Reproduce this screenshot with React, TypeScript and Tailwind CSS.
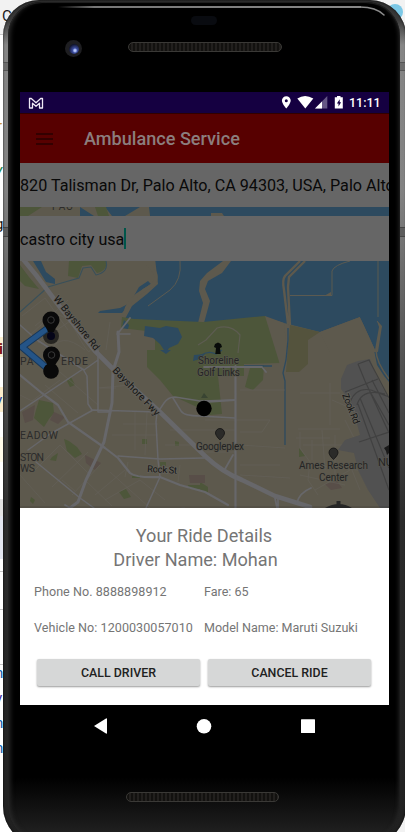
import React from "react";

const PAGE_SLIVERS = [
  { top: 117, left: -3, text: "r", cls: "text-[#c98a2b]" },
  { top: 164, left: -6, text: "Y", cls: "text-[#1f8a4c]" },
  { top: 215, left: -5, text: "g", cls: "text-[#111]" },
  { top: 340, left: -1, text: "i", cls: "text-[#7a1010] font-bold" },
  { top: 391, left: -5, text: "v", cls: "text-[#173d9c]" },
  { top: 664, left: -5, text: "n", cls: "text-[#0b5cad]" },
  { top: 689, left: -5, text: "v", cls: "text-[#3a1c9c]" },
  { top: 714, left: -5, text: "n", cls: "text-[#0b5cad]" },
  { top: 739, left: -5, text: "n", cls: "text-[#0b5cad]" },
];

/* The desktop window that shows round the edges of the emulator. */
function Desktop() {
  return (
    <div className="absolute inset-0 overflow-hidden bg-white">
      <div className="h-[35px] border-b border-[#c8c8c8] bg-[#f2f2f2]" />
      <div className="absolute top-[6px] left-[2px] text-[15px] leading-5 text-[#1b1b1b]">C</div>
      <div className="absolute top-[4px] left-[387px] size-[16px] rounded-full bg-[#7cc8e6]" />
      <div className="absolute top-[337px] left-0 h-[20px] w-1 bg-[#fbf0d2]" />
      <div className="absolute top-[387px] left-0 h-[25px] w-1 bg-[#fbeccb]" />
      <div className="absolute top-[437px] left-0 h-[25px] w-1 bg-[#fffbea]" />
      <div className="absolute top-[499px] left-0 h-[17px] w-1 bg-[#e4e4e4]" />
      <div className="absolute top-[516px] left-0 h-[43px] w-1 bg-[#e3e6f0]" />
      <div className="absolute top-[571px] left-0 h-px w-1 bg-[#c4c4c4]" />
      <div className="absolute top-[609px] left-0 h-px w-1 bg-[#c4c4c4]" />
      <div className="absolute top-[664px] left-0 h-px w-1 bg-[#c4c4c4]" />
      <div className="absolute right-0 bottom-0 size-10 bg-[#f2f2f2]" />
      {PAGE_SLIVERS.map((s) => (
        <span key={s.top} className={"absolute text-[15px] leading-[18px] " + s.cls} style={{ top: s.top, left: s.left }}>
          {s.text}
        </span>
      ))}
    </div>
  );
}

function MapView() {
  return (
    <svg viewBox="20 207 369 301" className="absolute inset-0 h-full w-full" fontFamily="Roboto, sans-serif">
      <rect x="20" y="207" width="369" height="301" fill="#5d594d" />
      {/* Water */}
      <g fill="#2d4a5f">
        <path d="M149 207H389V360L375 350L360 317L320 332L284 323L265 317L203 323L125 319L132 306L147 294L158 284L157 275Z" />
        <path d="M105 207H140L125 216H112ZM80 207L94 216H80Z" />
        <path d="M33 261H41L46 272L55 279V284L46 282Z" />
        <path d="M148 281L139 287L130 303L120 308L100 311L98 313L122 313L133 300L143 289L151 284Z" />
        <path d="M374 350H389V382L384 376L377 365Z" />
      </g>
      <path d="M360 317L375 350H389V352H330L320 332Z" fill="#5d594d" />
      <path d="M360 317L378 352H389V317Z" fill="#2d4a5f" />
      <path d="M223 261H231L222 273L208 281L205 289L210 301L204 323H198L203 303L199 291L200 281L207 273Z" fill="#5d594d" />
      <path d="M211 213h11l2 3h-13z" fill="#5d594d" />
      <path d="M145 261C151 269 159 272 155 282C149 290 135 292 127 307L122 321" fill="none" stroke="#5d594d" strokeWidth="3.5" />
      <path d="M300 261L285 276Q282 280 284 290L288 324M305 261L289 277L288 287L290 326" fill="none" stroke="#5d594d" strokeWidth="2.4" />
      <path d="M290 295.5H332V271Q334 265 350 261M378 261V317M377 321L381 326L377 350M180 261Q182 280 170 290L148 306" fill="none" stroke="#5b5a51" strokeWidth="1" />
      <path d="M331 292v4h-7zM377 321L382 326L378 352L375 350L379 327Z" fill="#5d594d" />
      <path d="M376 350Q376 362 389 379" fill="none" stroke="#5d594d" strokeWidth="1.5" />

      {/* Parks */}
      <g fill="#4d563a">
        <path d="M20 207H42L28 216H20ZM95 207H106L109 216H98Z" />
        <path d="M69 261H106Q108 270 97 273L91 265L82 266L78 278L68 276Z" />
        <path d="M20 265L29 277L39 289L25 286L20 281Z" />
        <path d="M122 317L134 319L203 322L265 316L268 319L280 362V363L244 364V376H218L222 414L210 415L197 407L173 396L160 380L147 367V350H155V332L121 328Z" />
        <path d="M250 368L264 365L263 380L253 390L245 387Z" />
        <path d="M39 400L53 403L54 413L49 419L44 427L34 418L36 410Z" />
        <path d="M67 381L71 377L75 385L70 387Z M64 439L69 441L77 447L82 454L75 458L67 451Z M52 457L58 453L56 461L50 460Z M119 492L126 489L131 497L124 499Z" />
        <path d="M142 439h5v5h-5zM175 441l4 1v4h-4zM188 485h12l2 4h-13zM160 462h6v4h-6zM299 448l6 8-6 1zM200 482l8 5v7l-8-4zM132 475h8v3h-8zM31 497l4 3-2 4-3-3z" />
      </g>
      <path d="M265 316L284 323L289 372L281 368Z" fill="#5d594d" />
      <path d="M290 325L320 332L308 340V364L299 372H286Z" fill="#54533d" />
      <path d="M106 261Q109 272 96 275L91 267L83 268L79 278L65 282L48 287L20 312" fill="none" stroke="#39505a" strokeWidth="1.1" />
      <path d="M145 326L160 328L166 326L178 328L182 337L178 344L169 348L166 353L160 344L153 338L144 336ZM124 320L129 325L128 329L122 328ZM160 350h11l-5 4zM194 355l11-1-5 5-7 2z" fill="#2d4a5f" />
      <path d="M288 328L288 340L286 360L283 373L285 381V445M244 366H272M200 356Q208 350 216 354L222 350" fill="none" stroke="#2d4a5f" strokeWidth="1.3" />
      <path d="M198 345L206 340L217 328Q231 324 240 335L238 353" fill="none" stroke="#5d5c51" strokeWidth="1.2" />

      {/* Built-up blocks */}
      <g fill="#584e48">
        <path d="M22 412L35 405L33 420L25 423ZM54 412L65 417L58 424L50 420ZM85 455L101 463L95 470L86 463ZM189 475H205V483H190ZM325 484L337 481L342 488L331 490Z" />
      </g>

      {/* Minor streets */}
      <g fill="none" stroke="#64625a" strokeWidth="0.6">
        <path d="M22 316L45 298L68 330M30 335L68 300M38 343L76 317M35 326Q60 302 75 330T90 350M50 352Q60 330 85 350M110 322L106 350M20 395L32 401L60 380M60 372L98 405M45 385L78 413M100 388H116M130 385L98 388M123 424H158M135 412V450M147 412L145 455M112 435H158M170 430H235M165 445H205" />
        <path d="M20 475L45 503M35 470L60 445L90 475M52 487L88 452M72 495L100 465M62 480L75 491M95 495L125 470M105 500L140 480L165 500M85 480L112 506M110 472L150 508M128 462L125 477M180 465L178 482M205 420H270L262 432H240M205 452H235M240 390H285M240 445L285 448M240 465H280M240 475L290 478M300 393H340M330 383V425M355 410L332 400M298 429H340M300 432L300 448L310 462L308 480L318 495M303 445H344M312 440V460M322 430L325 470M335 435V475M310 465L358 470M300 475L345 485M315 490L350 470M345 420L355 440M350 465L360 490M296 438H330" />
      </g>

      {/* Airfield */}
      <path d="M341 379L347 365L358 361L370 359L375 373L389 400V508H380L368 490L358 470L354 453L338 450L345 440L360 435L356 420L349 400L341 389Z" fill="#515151" />
      <path d="M372 380L389 413M358 364L369 360L389 398M358 364L365 381L389 433M360 398L389 468M358 404L389 490M345 392L378 379M350 402Q356 387 371 390L389 397M357 405Q362 388 385 394M359 442L389 432M368 388L389 425" fill="none" stroke="#414141" strokeWidth="1.2" />

      {/* Roads */}
      <g fill="none" stroke="#67676a" strokeLinecap="round" strokeLinejoin="round">
        <path d="M22 258L36 275L60 307L95 351L113 369L160 412L205 456Q222 472 242 480L275 496L310 507" strokeWidth="4.6" />
        <path d="M118 332L119 352L113 371L112 403L104 442L86 480L78 502L70 508" strokeWidth="3" />
        <path d="M235.500 366V508M20 375L43 394L58 405L68 422L105 448L118 458L130 473Q136 478 160 477L180 485L205 492L228 505" strokeWidth="2.2" />
        <path d="M28 450L50 434L93 410L158 412L164 403Q168 397 175 397L200 401L235 400M173 398L181 411Q184 416 200 416L235 418M157 412L156 422L158 460L160 477L146 508M36 462L80 498L94 508M118 456L160 459L204 458M20 411L83 369M98 350V412H110M83 369L87 376L88 404L92 410M20 325L37 340L84 370L98 360M117 334H130" strokeWidth="1.5" />
        <path d="M204 367H262L266 372M205 402L235 400M70 508L65 505M278 498L278 508M297 503Q299 493 311 488M225 469L233 455M277 508L275 498M130 318L119 332" strokeWidth="1.8" />
      </g>

      {/* Labels */}
      <g fill="#2b2b2b" fontSize="10.400" letterSpacing="1">
        <text x="52" y="209.500" fontSize="10">PAO</text>
        <text x="20" y="364.500">PA</text>
        <text x="61" y="364.500" textLength="28">ERDE</text>
        <text x="20" y="438.500" textLength="39">EADOW</text>
        <text x="20" y="460.500" textLength="25">STON</text>
        <text x="20" y="472" textLength="16">WS</text>
      </g>
      <g fill="#141414" fontSize="10" stroke="#626059" strokeWidth="1.600" paintOrder="stroke">
        <text textLength="67" transform="translate(53 299) rotate(51)">W Bayshore Rd</text>
        <text textLength="63" transform="translate(112 371) rotate(46)">Bayshore Fwy</text>
        <text x="147" y="472" textLength="30" fontSize="9.500" transform="rotate(3 147 472)">Rock St</text>
        <text textLength="32" fontSize="9.500" transform="translate(342 395) rotate(68)">Zook Rd</text>
        <text x="178" y="513" fontSize="9" transform="rotate(-70 184 508)">N</text>
      </g>
      <g fill="#242424" fontSize="10" stroke="#5a584f" strokeWidth="1" paintOrder="stroke">
        <text x="198" y="364" textLength="41">Shoreline</text>
        <text x="197" y="375.500" textLength="43">Golf Links</text>
        <text x="196" y="450" textLength="48">Googleplex</text>
        <text x="299" y="469" textLength="69">Ames Research</text>
        <text x="319" y="480.500" textLength="29">Center</text>
        <text x="378" y="466" fontSize="11">NU</text>
      </g>

      {/* Places */}
      <path d="M220 428.500a4.500 4.500 0 0 1 4.500 4.500c0 3-4.500 7-4.500 7s-4.500-4-4.500-7a4.500 4.500 0 0 1 4.500-4.500zM333.500 448a4.500 4.500 0 0 1 4.500 4.500c0 3-4.500 7-4.500 7s-4.500-4-4.500-7a4.500 4.500 0 0 1 4.500-4.500z" fill="#2b2b29" stroke="#121212" strokeWidth="0.800" />
      <path d="M218 342.500l3 1.500 1 3-2 1 .7 6h-5.400l.7-6-2-1 1-3z" fill="#080b09" />
      <path d="M201 398L204 393L208 398Z" fill="#394432" />
      <circle cx="204" cy="408.500" r="7.700" fill="#000" />
      <path d="M384 448l5-3v8l-2 2-1-4z" fill="#191919" />
      <path d="M325 508Q339 500 352 508ZM336.500 501h4v5h-4z" fill="#262626" />

      {/* Route with its end pins */}
      <g fill="#090909">
        <circle cx="51" cy="336" r="8" opacity=".65" />
        <circle cx="51" cy="336" r="4" fill="#050518" />
        <path d="M48 328L22 347L48 369" fill="none" stroke="#17375a" strokeWidth="7" strokeLinejoin="round" />
        <path d="M48 328L22 347L48 369" fill="none" stroke="#245487" strokeWidth="5" strokeLinejoin="round" />
        <path d="M51 311.500a8.500 8.500 0 0 1 8.500 8.500c0 5-4 7-5.500 12h-6c-1.500-5-5.500-7-5.500-12a8.500 8.500 0 0 1 8.500-8.500z" />
        <circle cx="51" cy="371" r="7.800" />
        <path d="M51.500 346.500a8.500 8.500 0 0 1 8.500 8.500c0 5-4 7-5.500 12h-6c-1.500-5-5.500-7-5.500-12a8.500 8.500 0 0 1 8.500-8.500z" />
        <circle cx="51" cy="320" r="3.300" fill="none" stroke="#383838" />
        <circle cx="51.500" cy="355" r="3.300" fill="none" stroke="#383838" />
      </g>
      <rect x="20" y="506" width="369" height="2" fill="#222" opacity=".15" />
    </svg>
  );
}

function StatusBar() {
  return (
    <div className="flex h-[21px] shrink-0 items-center bg-[#150041] px-2 text-white">
      <svg viewBox="0 0 16 14" className="h-[14px] w-4">
        <path d="M1.500 12V2.500h1.800L8 6.700l4.700-4.200h1.800V12h-3V7.200L8 10.300 4.500 7.200V12Z" fill="none" stroke="#eee9f5" strokeWidth="1.300" strokeLinejoin="round" />
      </svg>
      <svg viewBox="280 93 64 20" className="ml-auto h-5 w-16">
        <path d="M286.300 96.200a4.400 4.400 0 0 1 4.400 4.400c0 3.200-4.400 8-4.400 8s-4.400-4.800-4.400-8a4.400 4.400 0 0 1 4.400-4.400zm0 3a1.500 1.500 0 1 0 0 3 1.500 1.500 0 0 0 0-3z" fill="#fff" fillRule="evenodd" />
        <path d="M297.300 98.500Q305 93.500 313.300 98.500L305.300 108.500Z" fill="#fff" />
        <path d="M327.300 96V108.500H315Z" fill="#655785" />
        <path d="M322 101.500V108.500H315Z" fill="#fff" />
        <path d="M337 96h3.500v1.300h2.300v11.200h-8V97.300h2.200zM339.700 99.200l-2.800 4.400h1.600v3l2.600-4.400h-1.400z" fill="#fff" fillRule="evenodd" />
      </svg>
      <span className="ml-[5px] w-[32px] pt-px text-[12.5px] leading-5 font-medium whitespace-nowrap">11:11</span>
    </div>
  );
}

function ActionButton({ children }: { children: React.ReactNode }) {
  return (
    <button className="h-[27px] w-[163px] rounded-[2px] bg-[#d6d7d7] pt-[2px] text-[12.4px] font-medium text-[#212121] shadow-[0_1px_2px_rgba(0,0,0,0.4)]">
      {children}
    </button>
  );
}

function RideSheet() {
  return (
    <div className="flex h-[197px] shrink-0 flex-col bg-white px-[14px] pt-4 text-[#757575]">
      <div className="-ml-px text-center text-[18.1px] leading-6">
        <p>Your Ride Details</p>
        <p className="-ml-[17px]">Driver Name: Mohan</p>
      </div>
      <div className="mt-[10px] grid grid-cols-[170px_1fr] gap-y-4 text-[12.55px] leading-5 whitespace-nowrap">
        <span className="tracking-[0.05px]">Phone No. 8888898912</span>
        <span>Fare: 65</span>
        <span className="tracking-[0.05px]">Vehicle No: 1200030057010</span>
        <span>Model Name: Maruti Suzuki</span>
      </div>
      <div className="mt-[21px] ml-[3px] flex gap-2">
        <ActionButton>CALL DRIVER</ActionButton>
        <ActionButton>CANCEL RIDE</ActionButton>
      </div>
    </div>
  );
}

function Screen() {
  return (
    <div className="ml-[17px] flex h-[613px] w-[369px] flex-col overflow-hidden">
      <StatusBar />
      <div className="flex h-[50px] shrink-0 items-center border-t border-[#300000] bg-[#570000] pl-4">
        <div className="flex w-[17px] flex-col gap-[3px]">
          <i className="h-[2px] bg-[#330000]" />
          <i className="h-[2px] bg-[#330000]" />
          <i className="h-[2px] bg-[#330000]" />
        </div>
        <h1 className="ml-[31px] text-[18.1px] leading-6 font-medium whitespace-nowrap text-[#8b7e7e]">Ambulance Service</h1>
      </div>
      <div className="flex h-[44px] shrink-0 items-center overflow-hidden bg-[#666] pt-[2px] text-[16.15px] whitespace-nowrap text-[#090909]">
        820 Talisman Dr, Palo Alto, CA 94303, USA, Palo Alto
      </div>
      <div className="relative h-[301px] shrink-0 overflow-hidden">
        <MapView />
        <div className="relative mt-[9px] flex h-[45px] items-center bg-[#666] pt-[3px] text-[16.1px] whitespace-nowrap text-[#090909]">
          castro city usa
          <i className="-mt-[4px] h-[21px] w-[1.5px] bg-[#00564a]" />
        </div>
      </div>
      <RideSheet />
    </div>
  );
}

const GRILLE =
  "h-[10px] rounded-full border border-[#3a3936] bg-[repeating-linear-gradient(90deg,#12110f_0_2px,#22201e_2px_4px)]";

export default function App() {
  return (
    <main className="relative h-[832px] w-[405px] overflow-hidden font-['Roboto',sans-serif]">
      <Desktop />
      <div className="relative ml-[3px] h-[846px] w-[403px] rounded-t-[36px] rounded-b-[40px] bg-[linear-gradient(180deg,#2c2c2c_0,#3a3a3a_20px,#858585_45px,#828282_190px,#555_350px,#2b2b2b_520px,#202020_846px)] shadow-[inset_0_0_2px_#000]">
        <div className="absolute top-[62px] left-0 h-[9px] w-full border-y border-[#555] bg-[#6c6c6c]" />
        <div className="absolute top-[227px] left-0 h-[10px] w-full border-y border-[#444] bg-[#5c5c5c]" />
        <div className="absolute top-[2px] right-[6px] bottom-[3px] left-[5px] rounded-t-[34px] rounded-b-[38px] bg-[linear-gradient(180deg,#000_0,#000_775px,#111_805px,#222_835px)] shadow-[inset_5px_0_5px_-3px_#2c2c2c,inset_-4px_0_4px_-3px_#292929,inset_0_1px_1px_#222]" />
        <div className="absolute top-[6px] left-[55px] h-[2px] w-[303px] bg-[linear-gradient(90deg,transparent,#777_12%,#888)]" />
        <svg viewBox="360 5 27 14" className="absolute top-[5px] left-[357px] h-[14px] w-[27px]">
          <path d="M360 7Q376 7 384 15" fill="none" stroke="#8c8c8c" strokeWidth="1.500" strokeLinecap="round" />
        </svg>
        <div className="relative flex h-[92px] items-start">
          <div className="mt-[40px] ml-[62px] flex size-[17px] items-center justify-center rounded-full bg-[#1e1e21]">
            <i className="size-[10px] rounded-full bg-[radial-gradient(circle_at_60%_65%,#b7c9ff_0_10%,#3c4d9f_28%,#11152f_70%)]" />
          </div>
          <div className={"mt-[42px] ml-[46px] w-[154px] " + GRILLE} />
          <div className="absolute top-[16px] left-[188px] h-[9px] w-[26px] rounded-full bg-[#090b10]" />
        </div>
        <div className="relative">
          <Screen />
        </div>
        <div className="relative h-[141px]">
          <svg viewBox="90 715 230 22" className="ml-[87px] block h-[22px] w-[230px] translate-y-[10px]" fill="#fff">
            <path d="M94 726L106 718.500Q107 718 107 719V733Q107 734 106 733.500Z" />
            <circle cx="204" cy="726.300" r="7.300" />
            <rect x="301" y="719.300" width="14" height="13.700" rx=".5" />
          </svg>
          <div className={"mt-[65px] ml-[123px] w-[153px] " + GRILLE} />
        </div>
      </div>
    </main>
  );
}
